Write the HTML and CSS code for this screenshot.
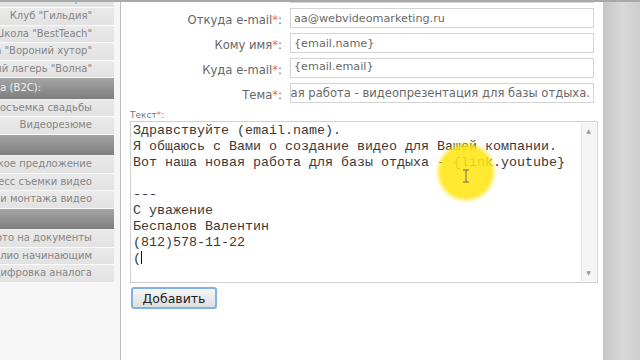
FILE: index.html
```html
<!DOCTYPE html>
<html lang="ru">
<head>
<meta charset="utf-8">
<title>Рассылка</title>
<link rel="stylesheet" href="styles.css">
</head>
<body>
<div class="topline"></div>
<div class="page">
  <aside class="sidebar">
    <ul class="menu">
      <li class="item"><span>Усадьба "Ясные Зори"</span></li>
      <li class="item"><span>Клуб "Гильдия"</span></li>
      <li class="item"><span>Школа "BestTeach"</span></li>
      <li class="item"><span>Усадьба "Вороний хутор"</span></li>
      <li class="item"><span>Детский лагерь "Волна"</span></li>
      <li class="head"><span>Частные лица (B2C):</span></li>
      <li class="item"><span>Видеосъемка свадьбы</span></li>
      <li class="item"><span>Видеорезюме</span></li>
      <li class="head"></li>
      <li class="item"><span>Коммерческое предложение</span></li>
      <li class="item"><span>Процесс съемки видео</span></li>
      <li class="item"><span>Стоимость съемки и монтажа видео</span></li>
      <li class="head"></li>
      <li class="item"><span>Фото на документы</span></li>
      <li class="item"><span>Портфолио начинающим</span></li>
      <li class="item"><span>Оцифровка аналога</span></li>
    </ul>
  </aside>
  <main class="main">
    <div class="form">
      <div class="label"></div>
      <div class="field"></div>
      <div class="label">Откуда e-mail<span class="req">*</span>:</div>
      <div class="field">aa@webvideomarketing.ru</div>
      <div class="label">Кому имя<span class="req">*</span>:</div>
      <div class="field">{email.name}</div>
      <div class="label">Куда e-mail<span class="req">*</span>:</div>
      <div class="field field-top">{email.email}</div>
      <div class="label">Тема<span class="req">*</span>:</div>
      <div class="field field-end"><span class="clip">Наша новая работа - видеопрезентация для базы отдыха.</span></div>
    </div>
    <div class="text-label">Текст<span class="req">*</span>:</div>
    <div class="textarea">
      <div class="text-content">Здравствуйте (email.name).
Я общаюсь с Вами о создание видео для Вашей компании.
Вот наша новая работа для базы отдыха - {link.youtube}

---
С уважение
Беспалов Валентин
(812)578-11-22
(<span class="caret"></span></div>
      <div class="scrollbar">
        <span class="arrow">&#9650;</span>
        <span class="arrow">&#9660;</span>
      </div>
      <div class="highlight"></div>
      <svg class="ibeam" width="8" height="14" viewBox="0 0 8 14"><path d="M1 1h6M4 1v12M1 13h6" stroke="#666" stroke-width="1" fill="none"/></svg>
    </div>
    <button class="btn" type="button">Добавить</button>
  </main>
  <div class="backdrop"></div>
</div>
</body>
</html>
```

FILE: styles.css
```css
* { box-sizing: border-box; }
html, body { margin: 0; padding: 0; }
body {
  width: 640px;
  height: 360px;
  overflow: hidden;
  background: #fff;
  font-family: "DejaVu Sans", Verdana, sans-serif;
  position: relative;
}
.topline {
  height: 2px;
  background: #a9a9a9;
  position: absolute;
  left: 0; right: 0; top: 0;
  z-index: 5;
}
.page {
  display: flex;
  height: 360px;
}
.sidebar {
  width: 121px;
  flex: none;
  background: #f6f6f6;
  border-right: 1px solid #bdbdbd;
  padding-right: 6px;
  overflow: hidden;
}
.menu {
  list-style: none;
  margin: -9.5px 0 0 0;
  padding: 0;
  width: 114px;
}
.menu li {
  display: block;
  direction: rtl;
  text-align: right;
  overflow: hidden;
  white-space: nowrap;
  font-size: 10px;
}
.menu li span {
  display: inline-block;
  direction: ltr;
  unicode-bidi: isolate;
  white-space: nowrap;
}
.item {
  height: 17.5px;
  line-height: 16.5px;
  padding-right: 22px;
  color: #858585;
  background: linear-gradient(#eaeaea, #e2e2e2);
  border-bottom: 1px solid #fafafa;
}
.head {
  height: 21.5px;
  line-height: 20.5px;
  padding-right: 73px;
  color: #f2f2f2;
  background: linear-gradient(#a5a5a5, #7e7e7e);
  border-bottom: 1px solid #f0f0f0;
}
.main {
  width: 482px;
  flex: none;
  background: #fff;
  padding: 0 0 0 9px;
}
.backdrop {
  flex: 1;
  background: linear-gradient(to right, #c6c6c6, #d9d9d9 55%, #cdcdcd);
}
.form {
  margin-top: -17px;
  display: grid;
  grid-template-columns: 152px 304px;
  column-gap: 8px;
  row-gap: 5px;
}
.label {
  height: 20px;
  display: flex;
  justify-content: flex-end;
  align-items: center;
  padding-top: 3px;
  font-size: 11.6px;
  color: #666;
  white-space: nowrap;
}
.req { color: #f06a6a; }
.field {
  height: 20px;
  border: 1px solid #d4d4d4;
  background: #fff;
  display: flex;
  align-items: center;
  padding: 0 3px;
  font-size: 11.2px;
  color: #6a6a6a;
  white-space: nowrap;
  overflow: hidden;
}
.field-top { align-items: flex-start; padding-top: 1px; }
.field-end { justify-content: flex-end; padding-right: 3px; font-size: 11.6px; }
.clip { flex: none; }
.text-label {
  margin-top: 6px;
  height: 12px;
  font-size: 9px;
  line-height: 12px;
  color: #777;
}
.textarea {
  position: relative;
  width: 468px;
  height: 162px;
  border: 1px solid #d0d0d0;
  background: #fff;
  display: flex;
}
.text-content {
  flex: 1;
  padding: 1px 0 0 2px;
  font-family: "Liberation Mono", "Courier New", monospace;
  font-size: 13.33px;
  line-height: 16px;
  color: #3a3a3a;
  white-space: pre;
  overflow: hidden;
}
.caret {
  display: inline-block;
  width: 1px;
  height: 13px;
  background: #111;
  vertical-align: -2px;
}
.scrollbar {
  width: 15px;
  margin: 1px 1px 1px 0;
  background: #f5f5f5;
  border-left: 1px solid #e6e6e6;
  border-right: 1px solid #ececec;
  display: flex;
  flex-direction: column;
  justify-content: space-between;
  align-items: center;
  padding: 4px 0 4px;
}
.arrow {
  font-size: 6px;
  color: #999;
  line-height: 8px;
}
.highlight {
  position: absolute;
  left: 304px;
  top: 19px;
  width: 62px;
  height: 62px;
  border-radius: 50%;
  background: radial-gradient(circle, rgba(255, 230, 20, 0.88) 0, rgba(255, 230, 20, 0.88) 25px, rgba(255, 236, 70, 0) 31px);
}
.ibeam {
  position: absolute;
  left: 331px;
  top: 47px;
}
.btn {
  margin-top: 4px;
  margin-left: 1px;
  width: 86px;
  height: 22px;
  border: 2px solid #7fb2e6;
  border-radius: 3px;
  background: linear-gradient(#f6f6f6, #dedede);
  font-family: "DejaVu Sans", Verdana, sans-serif;
  font-size: 12.5px;
  color: #222;
  padding: 0;
  display: flex;
  align-items: center;
  justify-content: center;
}
```
